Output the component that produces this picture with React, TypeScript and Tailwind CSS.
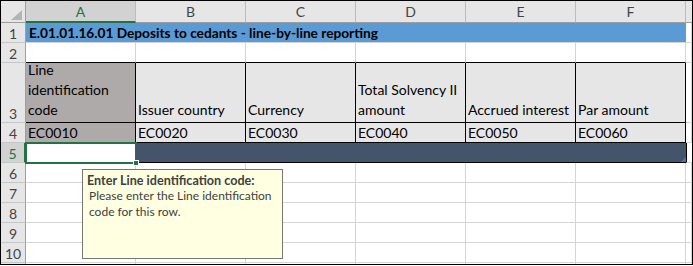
import type { ReactNode } from "react";

const COLS = ["A", "B", "C", "D", "E", "F"];
const HEADERS = ["Line identification code", "Issuer country", "Currency", "Total Solvency II amount", "Accrued interest", "Par amount"];
const CODES = ["EC0010", "EC0020", "EC0030", "EC0040", "EC0050", "EC0060"];

const font = { fontFamily: "Lato, 'Liberation Sans', sans-serif" };

function RowHead({ n, active }: { n?: number; active?: boolean }) {
  return (
    <div
      className={`flex items-end justify-center pb-[1px] text-[14px] leading-none border-b border-[#c6c6c6] ${
        active ? "bg-[#d2d2d2] text-[#217346] border-r-2 border-r-[#217346]" : "bg-[#e6e6e6] text-[#444] border-r border-r-[#9e9e9e]"
      }`}
    >
      {n}
    </div>
  );
}

function Cell({ className = "", children }: { className?: string; children?: ReactNode }) {
  return <div className={`border-r border-b border-[#d4d4d4] ${className}`}>{children}</div>;
}

export default function App() {
  return (
    <div className="bg-white w-[693px] h-[266px]">
      <div className="relative w-[693px] h-[265px] border border-black overflow-hidden" style={font}>
        <div className="grid grid-cols-[25px_repeat(6,110px)_6px] grid-rows-[22px_20px_20px_60px_repeat(7,20px)]">
          {/* column headers */}
          <div className="relative bg-[#e6e6e6] border-r border-b border-[#9e9e9e]">
            <div className="absolute left-[10px] top-[9px] w-0 h-0 border-l-[11px] border-l-transparent border-b-[10px] border-b-[#b4b4b4]" />
          </div>
          {COLS.map((c, i) => (
            <div
              key={c}
              className={`flex items-center justify-center text-[14px] border-r border-[#bcbcbc] ${
                i === 0 ? "bg-[#d2d2d2] text-[#217346] border-b-2 border-b-[#217346]" : "bg-[#e6e6e6] text-[#444] border-b border-b-[#9e9e9e]"
              }`}
            >
              {c}
            </div>
          ))}
          <div className="bg-[#e6e6e6] border-b border-[#9e9e9e]" />

          {/* row 1 */}
          <RowHead n={1} />
          <div className="col-span-6 bg-[#5b9bd5] border-b border-[#d4d4d4] flex items-end pl-[3px] pb-[2px] text-[13.7px] font-bold leading-none text-black whitespace-nowrap">
            E.01.01.16.01 Deposits to cedants - line-by-line reporting
          </div>
          <Cell />

          {/* row 2 */}
          <RowHead n={2} />
          {COLS.map((c) => (
            <Cell key={c} className="border-b-black" />
          ))}
          <Cell />

          {/* row 3 */}
          <RowHead n={3} />
          {HEADERS.map((h, i) => (
            <div
              key={h}
              className={`flex items-end px-[2px] pb-[2px] text-[14px] leading-[20px] text-black border-b border-r border-black ${
                i === 0 ? "bg-[#aeaaaa]" : "bg-[#e7e6e6]"
              }`}
            >
              <span className={i === 0 ? "w-[80px]" : i === 3 ? "w-[105px]" : ""}>{h}</span>
            </div>
          ))}
          <Cell />

          {/* row 4 */}
          <RowHead n={4} />
          {CODES.map((c, i) => (
            <div
              key={c}
              className={`flex items-end px-[2px] pb-[2px] text-[14px] leading-none text-black border-b border-r border-black ${
                i === 0 ? "bg-[#aeaaaa]" : "bg-[#e7e6e6]"
              }`}
            >
              {c}
            </div>
          ))}
          <Cell />

          {/* row 5 */}
          <RowHead n={5} active />
          <div className="relative bg-white border-r border-b border-black">
            <div className="absolute -left-[1px] -top-[1px] w-[112px] h-[22px] border-2 border-[#217346]" />
            <div className="absolute right-[-4px] bottom-[-4px] w-[6px] h-[6px] bg-[#217346] border border-white z-10" />
          </div>
          {COLS.slice(1).map((c) => (
            <div key={c} className="relative bg-[#44546a] border-b border-black">
              {c === "F" && (
                <div className="absolute right-0 bottom-0 w-0 h-0 border-l-[5px] border-l-transparent border-b-[5px] border-b-[#4472c4]" />
              )}
            </div>
          ))}
          <div className="border-l border-black border-b border-b-[#d4d4d4]" />

          {/* rows 6-10, then a partial row */}
          {[6, 7, 8, 9, 10, 0].map((n) => (
            <div key={n} className="contents">
              <RowHead n={n || undefined} />
              {COLS.map((c) => (
                <Cell key={c} />
              ))}
              <Cell />
            </div>
          ))}
        </div>

        {/* input message tooltip */}
        <div className="absolute left-[81px] top-[168px] w-[201px] h-[90px] bg-[#ffffe1] border border-[#767676] px-[4px] pt-[4px] text-[12px] leading-[16px] text-[#404040] whitespace-nowrap">
          <div className="font-bold text-[12.6px] leading-[14px]">Enter Line identification code:</div>
          <div className="pl-[2px]">
            Please enter the Line identification
            <br />
            code for this row.
          </div>
        </div>
      </div>
    </div>
  );
}
